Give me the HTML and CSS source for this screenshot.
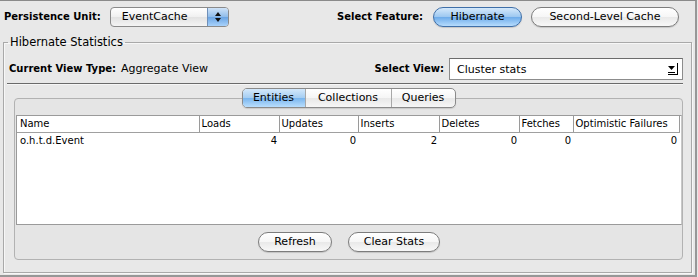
FILE: index.html
```html
<!DOCTYPE html>
<html>
<head>
<meta charset="utf-8">
<link rel="stylesheet" href="styles.css">
</head>
<body>
<div class="window">
  <div class="toprow">
    <span class="lbl">Persistence Unit:</span>
    <div class="popup">
      <span class="popup-text">EventCache</span>
      <span class="popup-arrows">
        <svg width="8" height="12" viewBox="0 0 8 12"><path d="M4 1 L7 5 L1 5 Z" fill="#111"/><path d="M1 7 L7 7 L4 11 Z" fill="#111"/></svg>
      </span>
    </div>
    <span class="spacer"></span>
    <span class="lbl">Select Feature:</span>
    <button class="pill pill-blue feat-hib">Hibernate</button>
    <button class="pill feat-slc">Second-Level Cache</button>
  </div>
  <fieldset class="group">
    <legend class="group-title">Hibernate Statistics</legend>
    <div class="viewrow">
      <span class="lbl">Current View Type:</span>
      <span class="val">Aggregate View</span>
      <span class="spacer"></span>
      <span class="lbl">Select View:</span>
      <div class="combo">
        <span class="combo-text">Cluster stats</span>
        <svg class="combo-arrow" width="14" height="14" viewBox="0 0 14 14"><path d="M2 4 L9 4 L5.5 8 Z" fill="#000"/><rect x="2" y="10" width="7" height="1" fill="#000"/><rect x="11" y="1" width="1" height="12" fill="#000"/><rect x="2" y="12" width="10" height="1" fill="#000"/></svg>
      </div>
    </div>
    <div class="sep"></div>
    <div class="tabs">
      <div class="seg">
        <span class="tab tab-sel t1">Entities</span>
        <span class="tab t2">Collections</span>
        <span class="tab t3">Queries</span>
      </div>
    </div>
    <div class="panel">
      <div class="tablebox">
        <table class="grid">
          <colgroup>
            <col class="c-name"><col class="c-loads"><col class="c-upd"><col class="c-ins"><col class="c-del"><col class="c-fet"><col class="c-opt">
          </colgroup>
          <thead>
            <tr>
              <th class="first">Name</th><th>Loads</th><th>Updates</th><th>Inserts</th><th>Deletes</th><th>Fetches</th><th class="last">Optimistic Failures</th>
            </tr>
          </thead>
          <tbody>
            <tr>
              <td class="name">o.h.t.d.Event</td><td>4</td><td>0</td><td>2</td><td>0</td><td>0</td><td>0</td>
            </tr>
          </tbody>
        </table>
      </div>
      <div class="btnrow">
        <button class="pill btn-refresh">Refresh</button>
        <button class="pill btn-clear">Clear Stats</button>
      </div>
    </div>
  </fieldset>
</div>
</body>
</html>
```

FILE: styles.css
```css
html, body {
  margin: 0;
  padding: 0;
  background: #e8e8e8;
}
.window {
  width: 697px;
  height: 277px;
  box-sizing: border-box;
  background: #e8e8e8;
  border-top: 1px solid #8a8a8a;
  border-right: 2px solid #979797;
  border-bottom: 2px solid #979797;
  overflow: hidden;
  font-family: "DejaVu Sans", sans-serif;
  font-size: 11px;
  color: #000;
}
.toprow {
  display: flex;
  align-items: flex-start;
  height: 34px;
  box-sizing: border-box;
  padding: 6px 16px 0 4px;
}
.lbl {
  font-weight: bold;
  font-size: 10px;
  line-height: 20px;
  white-space: nowrap;
}
.val {
  line-height: 22px;
  margin-left: 5px;
}
.spacer {
  flex: 1;
}
.popup {
  margin-left: 9px;
  width: 119px;
  height: 20px;
  box-sizing: border-box;
  border: 1px solid #8a8a8a;
  border-radius: 4px;
  background: linear-gradient(#ffffff, #f0f0f0 50%, #e2e2e2 51%, #f4f4f4);
  display: flex;
  overflow: hidden;
}
.popup-text {
  flex: 1;
  padding-left: 11px;
  line-height: 18px;
}
.popup-arrows {
  width: 20px;
  border-left: 1px solid #6f8fb8;
  background: linear-gradient(#cfe3f8, #8ebbea 50%, #6aa4e3 51%, #a8d2fb);
  display: flex;
  align-items: center;
  justify-content: center;
}
.pill {
  font-family: "DejaVu Sans", sans-serif;
  font-size: 11px;
  color: #000;
  height: 20px;
  box-sizing: border-box;
  border: 1px solid #7c7c7c;
  border-radius: 10px;
  background: linear-gradient(#ffffff, #f6f6f6 50%, #e9e9e9 51%, #f8f8f8);
  padding: 0;
  margin: 0;
  line-height: 18px;
  box-shadow: 0 1px 1px rgba(0,0,0,0.15);
}
.pill-blue {
  border-color: #3f6fa8;
  background: linear-gradient(#d5e9fb, #9cc7f0 50%, #6dabea 51%, #b6dcfd);
}
.feat-hib {
  width: 89px;
  margin-left: 10px;
}
.feat-slc {
  width: 148px;
  margin-left: 9px;
}
.group {
  margin: 0 3px 0 3px;
  padding: 0 8px 12px 4px;
  border: 1px solid #a9a9a9;
  box-shadow: inset 1px 1px 0 #f7f7f7, 1px 1px 0 #f7f7f7;
  min-width: 0;
}
.group-title {
  padding: 0 2px;
  font-size: 11.5px;
  line-height: 14px;
}
.viewrow {
  display: flex;
  align-items: center;
  margin-top: 9px;
  padding-left: 1px;
  height: 22px;
}
.combo {
  margin-left: 5px;
  width: 234px;
  height: 22px;
  box-sizing: border-box;
  background: #fff;
  border: 1px solid #8c8c8c;
  border-top-color: #6c6c6c;
  display: flex;
  align-items: center;
}
.combo-text {
  flex: 1;
  padding-left: 7px;
}
.combo-arrow {
  margin-right: 2px;
}
.sep {
  margin: 3px 0 0 -1px;
  height: 0;
  border-top: 1px solid #6a6a6a;
  border-bottom: 1px solid #f6f6f6;
}
.tabs {
  display: flex;
  justify-content: center;
  margin: 3px 0 -10px 6px;
  position: relative;
  z-index: 1;
}
.seg {
  display: flex;
  height: 20px;
  box-sizing: border-box;
  border: 1px solid #8a8a8a;
  border-radius: 5px;
  overflow: hidden;
  background: linear-gradient(#ffffff, #f5f5f5 50%, #e8e8e8 51%, #f6f6f6);
  box-shadow: 0 1px 1px rgba(0,0,0,0.12);
}
.tab {
  line-height: 18px;
  text-align: center;
  border-left: 1px solid #a8a8a8;
}
.tab-sel {
  background: linear-gradient(#d3e8fb, #a4cdf2 50%, #79b5ee 51%, #b9defd);
  border-left: none;
}
.t1 { width: 62px; }
.t2 { width: 85px; }
.t3 { width: 63px; }
.panel {
  margin-left: 6px;
  width: 669px;
  box-sizing: border-box;
  border: 1px solid #b2b2b2;
  border-radius: 4px;
  background: #e5e5e5;
  padding: 16px 0 7px 1px;
}
.tablebox {
  width: 666px;
  height: 110px;
  box-sizing: border-box;
  background: #fff;
  border: 1px solid #9a9a9a;
  border-right-color: #c8c8c8;
}
.grid {
  border-collapse: collapse;
  table-layout: fixed;
  width: 662px;
  font-size: 10px;
}
.c-name { width: 182px; }
.c-loads { width: 80px; }
.c-upd { width: 79px; }
.c-ins { width: 81px; }
.c-del { width: 80px; }
.c-fet { width: 54px; }
.c-opt { width: 106px; }
.grid th {
  height: 16px;
  padding: 0 0 0 2px;
  text-align: left;
  font-weight: normal;
  border-left: 1px solid #9a9a9a;
  border-bottom: 1px solid #a0a0a0;
  white-space: nowrap;
  overflow: hidden;
  line-height: 16px;
}
.grid th.first {
  border-left: none;
  padding-left: 3px;
}
.grid th.last {
  border-right: 1px solid #9a9a9a;
}
.grid td {
  height: 16px;
  padding: 0 2px 0 0;
  text-align: right;
  line-height: 16px;
}
.grid td.name {
  text-align: left;
  padding-left: 3px;
}
.btnrow {
  display: flex;
  justify-content: center;
  gap: 16px;
  margin-top: 7px;
}
.btn-refresh { width: 74px; }
.btn-clear { width: 92px; }
```
